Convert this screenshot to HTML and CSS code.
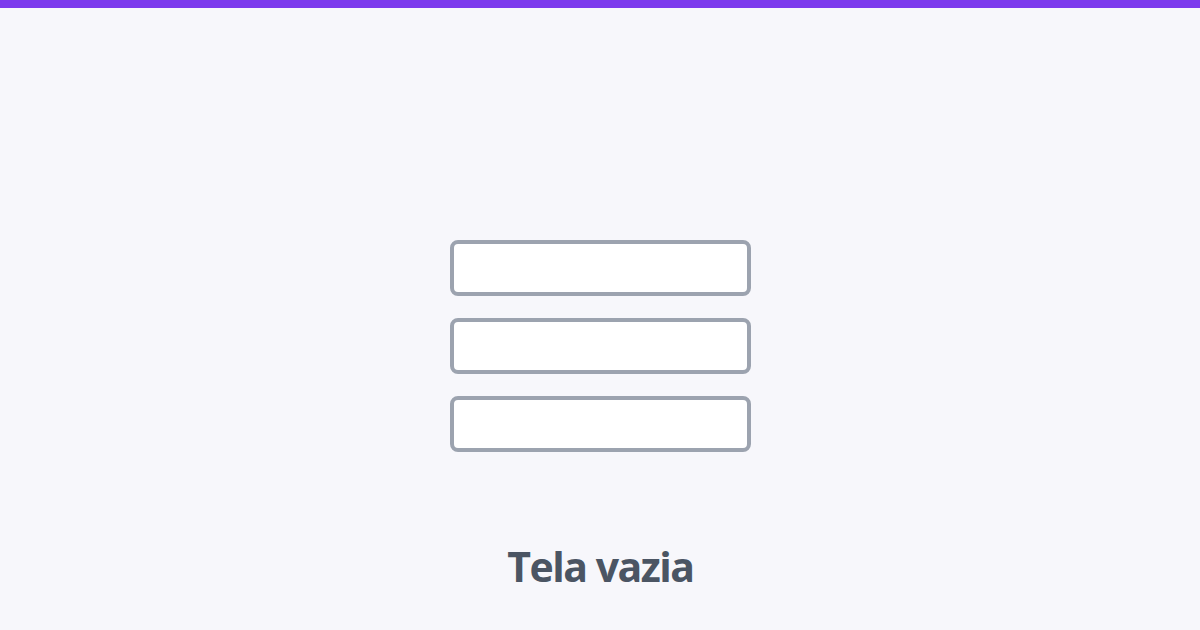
FILE: index.html
```html
<!DOCTYPE html>
<html lang="pt">
<head>
<meta charset="utf-8">
<title>Tela vazia</title>
<link rel="stylesheet" href="styles.css">
</head>
<body>
<div class="topbar"></div>
<main class="main">
  <div class="stack">
    <div class="field"></div>
    <div class="field"></div>
    <div class="field"></div>
  </div>
  <h1 class="title">Tela vazia</h1>
</main>
</body>
</html>
```
FILE: styles.css
```css
html, body {
  margin: 0;
  padding: 0;
}
body {
  width: 1200px;
  height: 630px;
  background: #f7f7fb;
  font-family: "Open Sans", Lato, sans-serif;
  overflow: hidden;
}
.topbar {
  height: 8px;
  background: #7c3aed;
}
.main {
  display: flex;
  flex-direction: column;
  align-items: center;
  padding-top: 232px;
}
.stack {
  display: flex;
  flex-direction: column;
  gap: 22px;
}
.field {
  box-sizing: border-box;
  width: 301px;
  height: 56px;
  background: #ffffff;
  border: 4px solid #9ca3af;
  border-radius: 8px;
}
.title {
  margin: 90px 0 0;
  padding-left: 1px;
  font-size: 41px;
  line-height: 48px;
  font-weight: 700;
  letter-spacing: -1.5px;
  color: #4b5563;
}
```
